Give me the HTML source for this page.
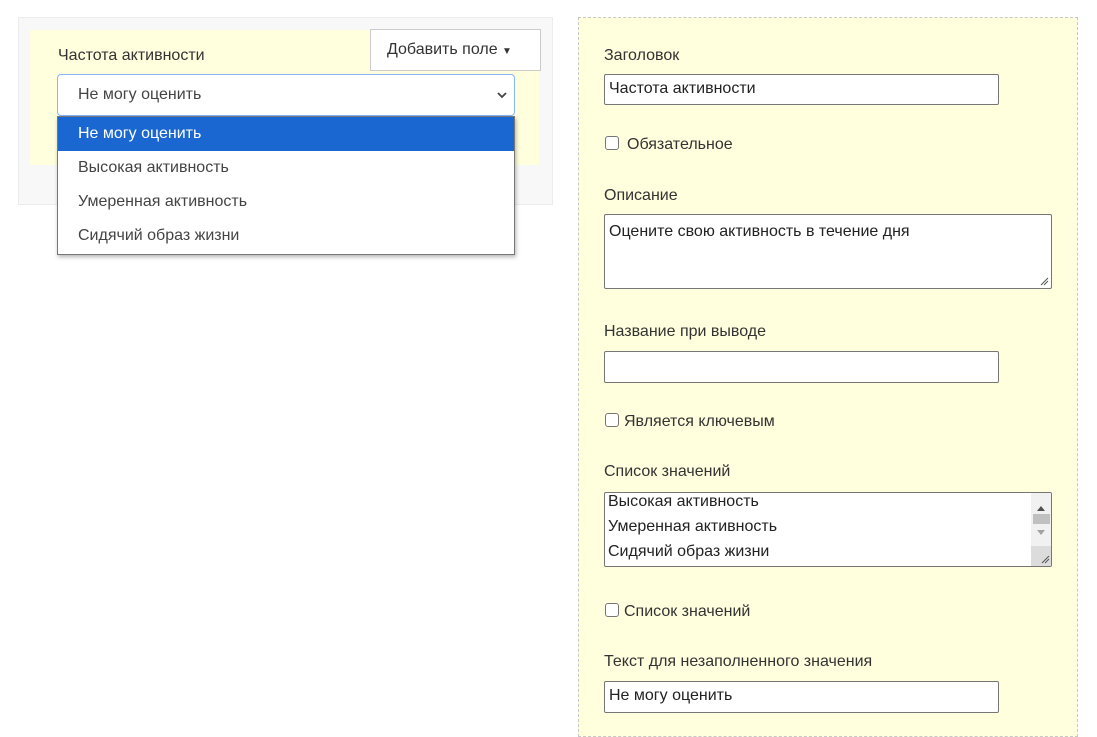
<!DOCTYPE html>
<html><head><meta charset="utf-8"><style>
*{box-sizing:border-box}
body{margin:0;width:1097px;height:723px;overflow:hidden;background:#fff;font-family:"Liberation Sans",sans-serif;font-size:16px;color:#333;position:relative}
.a{position:absolute}
.t{position:absolute;white-space:nowrap;line-height:20px}
.inp{position:absolute;background:#fff;border:1px solid #767676;border-radius:2px;padding:4px 4px;line-height:20px;color:#222}
.cb{position:absolute;width:14px;height:14px;border:1px solid #767676;border-radius:3px;background:#fff}
</style></head><body>
<div class="a" style="left:18px;top:17px;width:535px;height:188px;background:#f8f8f8;border:1px solid #ececec"></div>
<div class="a" style="left:30px;top:30px;width:509px;height:135px;background:#fffedd"></div>
<div class="t" style="left:58px;top:46px;color:#333">Частота активности</div>
<div class="a" style="left:370px;top:29px;width:171px;height:42px;background:#fff;border:1px solid #ccc;line-height:40px;padding-left:16px;color:#333">Добавить поле <span style="font-size:10px">▼</span></div>
<div class="a" style="left:57px;top:74px;width:458px;height:42px;background:#fff;border:1px solid #86b7fe;border-radius:4px;line-height:40px;padding-left:20px;color:#444">Не могу оценить
<svg style="position:absolute;right:6px;top:15px" width="12" height="10" viewBox="0 0 12 10"><path d="M2 3l4 4 4-4" fill="none" stroke="#444" stroke-width="1.8"/></svg></div>
<div class="a" style="left:57px;top:116px;width:458px;height:139px;background:#fff;border:1px solid #777;box-shadow:1px 2px 4px rgba(0,0,0,.3)">
<div style="height:34px;line-height:34px;padding-left:20px;background:#1a67d2;color:#fff">Не могу оценить</div>
<div style="height:34px;line-height:34px;padding-left:20px;color:#444">Высокая активность</div>
<div style="height:34px;line-height:34px;padding-left:20px;color:#444">Умеренная активность</div>
<div style="height:34px;line-height:34px;padding-left:20px;color:#444">Сидячий образ жизни</div>
</div>

<div class="a" style="left:578px;top:17px;width:500px;height:720px;background:#fffedd;border:1px dashed #c8c8c8"></div>
<div class="t" style="left:604px;top:46px">Заголовок</div>
<div class="inp" style="left:604px;top:74px;width:395px;height:31px">Частота активности</div>
<div class="cb" style="left:605px;top:136px"></div>
<div class="t" style="left:627px;top:135px">Обязательное</div>
<div class="t" style="left:604px;top:186px">Описание</div>
<div class="inp" style="left:604px;top:214px;width:448px;height:75px;padding-top:7px">Оцените свою активность в течение дня
<svg style="position:absolute;right:2px;bottom:2px" width="9" height="9"><path d="M1 8L8 1M4 8L8 4" stroke="#555" stroke-width="1"/></svg></div>
<div class="t" style="left:604px;top:322px">Название при выводе</div>
<div class="inp" style="left:604px;top:351px;width:395px;height:32px"></div>
<div class="cb" style="left:605px;top:413px"></div>
<div class="t" style="left:624px;top:412px">Является ключевым</div>
<div class="t" style="left:604px;top:462px">Список значений</div>
<div class="inp" style="left:604px;top:492px;width:448px;height:75px;padding:0 3px;line-height:25px;margin-top:0">
<div style="margin-top:-4px">Высокая активность</div><div>Умеренная активность</div><div>Сидячий образ жизни</div>
<div style="position:absolute;right:0;top:0;width:20px;height:73px;background:#f1f1f1">
<svg width="20" height="73"><path d="M6 18l4-5 4 5z" fill="#505050"/><rect x="2" y="21" width="17" height="10" fill="#c0c0c0"/><path d="M6 37l4 5 4-5z" fill="#a3a3a3"/><rect x="0" y="53" width="20" height="20" fill="#dcdcdc"/><path d="M11 70L18 63M14 70L18 66" stroke="#555"/></svg></div></div>
<div class="cb" style="left:605px;top:603px"></div>
<div class="t" style="left:624px;top:602px">Список значений</div>
<div class="t" style="left:604px;top:652px">Текст для незаполненного значения</div>
<div class="inp" style="left:604px;top:681px;width:395px;height:32px">Не могу оценить</div>
</body></html>
